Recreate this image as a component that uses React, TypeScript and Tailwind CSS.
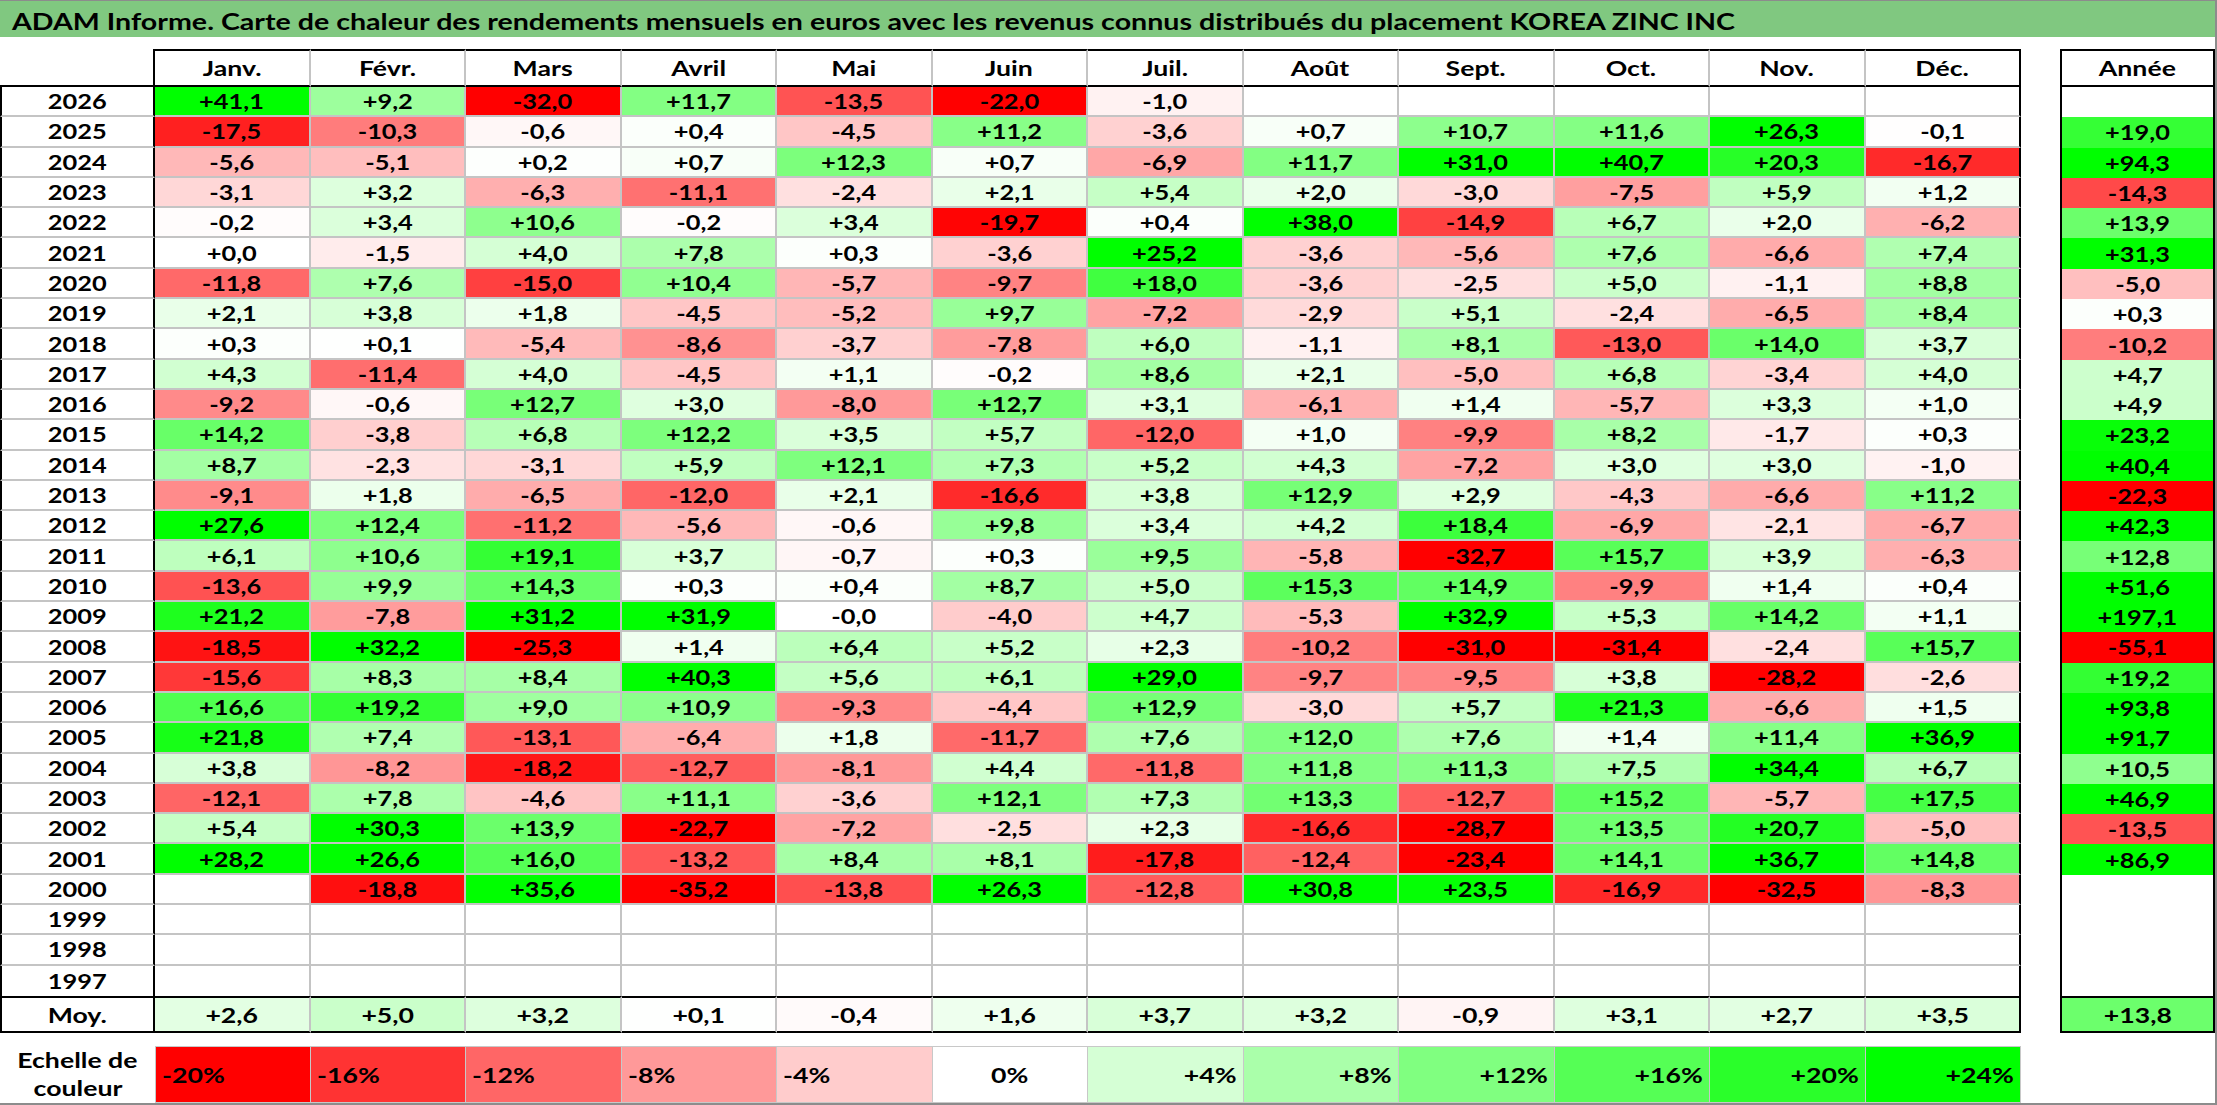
import React from 'react';

const months = ['Janv.', 'Févr.', 'Mars', 'Avril', 'Mai', 'Juin', 'Juil.', 'Août', 'Sept.', 'Oct.', 'Nov.', 'Déc.'];

const RAW = `2026 +41,1 +9,2 -32,0 +11,7 -13,5 -22,0 -1,0 . . . . . .
2025 -17,5 -10,3 -0,6 +0,4 -4,5 +11,2 -3,6 +0,7 +10,7 +11,6 +26,3 -0,1 +19,0
2024 -5,6 -5,1 +0,2 +0,7 +12,3 +0,7 -6,9 +11,7 +31,0 +40,7 +20,3 -16,7 +94,3
2023 -3,1 +3,2 -6,3 -11,1 -2,4 +2,1 +5,4 +2,0 -3,0 -7,5 +5,9 +1,2 -14,3
2022 -0,2 +3,4 +10,6 -0,2 +3,4 -19,7 +0,4 +38,0 -14,9 +6,7 +2,0 -6,2 +13,9
2021 +0,0 -1,5 +4,0 +7,8 +0,3 -3,6 +25,2 -3,6 -5,6 +7,6 -6,6 +7,4 +31,3
2020 -11,8 +7,6 -15,0 +10,4 -5,7 -9,7 +18,0 -3,6 -2,5 +5,0 -1,1 +8,8 -5,0
2019 +2,1 +3,8 +1,8 -4,5 -5,2 +9,7 -7,2 -2,9 +5,1 -2,4 -6,5 +8,4 +0,3
2018 +0,3 +0,1 -5,4 -8,6 -3,7 -7,8 +6,0 -1,1 +8,1 -13,0 +14,0 +3,7 -10,2
2017 +4,3 -11,4 +4,0 -4,5 +1,1 -0,2 +8,6 +2,1 -5,0 +6,8 -3,4 +4,0 +4,7
2016 -9,2 -0,6 +12,7 +3,0 -8,0 +12,7 +3,1 -6,1 +1,4 -5,7 +3,3 +1,0 +4,9
2015 +14,2 -3,8 +6,8 +12,2 +3,5 +5,7 -12,0 +1,0 -9,9 +8,2 -1,7 +0,3 +23,2
2014 +8,7 -2,3 -3,1 +5,9 +12,1 +7,3 +5,2 +4,3 -7,2 +3,0 +3,0 -1,0 +40,4
2013 -9,1 +1,8 -6,5 -12,0 +2,1 -16,6 +3,8 +12,9 +2,9 -4,3 -6,6 +11,2 -22,3
2012 +27,6 +12,4 -11,2 -5,6 -0,6 +9,8 +3,4 +4,2 +18,4 -6,9 -2,1 -6,7 +42,3
2011 +6,1 +10,6 +19,1 +3,7 -0,7 +0,3 +9,5 -5,8 -32,7 +15,7 +3,9 -6,3 +12,8
2010 -13,6 +9,9 +14,3 +0,3 +0,4 +8,7 +5,0 +15,3 +14,9 -9,9 +1,4 +0,4 +51,6
2009 +21,2 -7,8 +31,2 +31,9 -0,0 -4,0 +4,7 -5,3 +32,9 +5,3 +14,2 +1,1 +197,1
2008 -18,5 +32,2 -25,3 +1,4 +6,4 +5,2 +2,3 -10,2 -31,0 -31,4 -2,4 +15,7 -55,1
2007 -15,6 +8,3 +8,4 +40,3 +5,6 +6,1 +29,0 -9,7 -9,5 +3,8 -28,2 -2,6 +19,2
2006 +16,6 +19,2 +9,0 +10,9 -9,3 -4,4 +12,9 -3,0 +5,7 +21,3 -6,6 +1,5 +93,8
2005 +21,8 +7,4 -13,1 -6,4 +1,8 -11,7 +7,6 +12,0 +7,6 +1,4 +11,4 +36,9 +91,7
2004 +3,8 -8,2 -18,2 -12,7 -8,1 +4,4 -11,8 +11,8 +11,3 +7,5 +34,4 +6,7 +10,5
2003 -12,1 +7,8 -4,6 +11,1 -3,6 +12,1 +7,3 +13,3 -12,7 +15,2 -5,7 +17,5 +46,9
2002 +5,4 +30,3 +13,9 -22,7 -7,2 -2,5 +2,3 -16,6 -28,7 +13,5 +20,7 -5,0 -13,5
2001 +28,2 +26,6 +16,0 -13,2 +8,4 +8,1 -17,8 -12,4 -23,4 +14,1 +36,7 +14,8 +86,9
2000 . -18,8 +35,6 -35,2 -13,8 +26,3 -12,8 +30,8 +23,5 -16,9 -32,5 -8,3 .
1999 . . . . . . . . . . . . .
1998 . . . . . . . . . . . . .
1997 . . . . . . . . . . . . .`;

const MOY = ['+2,6', '+5,0', '+3,2', '+0,1', '-0,4', '+1,6', '+3,7', '+3,2', '-0,9', '+3,1', '+2,7', '+3,5'];
const MOY_YEAR = '+13,8';

type Row = { year: string; cells: (string | null)[]; annee: string | null };

const rows: Row[] = RAW.split('\n').map((line) => {
  const parts = line.trim().split(/\s+/);
  const vals = parts.slice(1).map((p) => (p === '.' ? null : p));
  return { year: parts[0], cells: vals.slice(0, 12), annee: vals[12] };
});

function colorOf(v: number): string {
  if (v < 0) {
    const t = Math.min(1, -v / 20);
    const c = Math.round(255 * (1 - t));
    return `rgb(255,${c},${c})`;
  }
  const t = Math.min(1, v / 24);
  const c = Math.round(255 * (1 - t));
  return `rgb(${c},255,${c})`;
}

function bg(s: string | null): string | undefined {
  if (!s) return undefined;
  return colorOf(parseFloat(s.replace(',', '.')));
}

function T({ children, origin = 'origin-center' }: { children: React.ReactNode; origin?: string }) {
  return <span className={`inline-block whitespace-nowrap scale-x-[1.27] ${origin}`}>{children}</span>;
}

const scale = [
  { v: -20, t: '-20%' },
  { v: -16, t: '-16%' },
  { v: -12, t: '-12%' },
  { v: -8, t: '-8%' },
  { v: -4, t: '-4%' },
  { v: 0, t: '0%' },
  { v: 4, t: '+4%' },
  { v: 8, t: '+8%' },
  { v: 12, t: '+12%' },
  { v: 16, t: '+16%' },
  { v: 20, t: '+20%' },
  { v: 24, t: '+24%' },
];

export default function App() {
  return (
    <div className="w-[2217px] h-[1105px] bg-white overflow-hidden flex flex-col border-t border-t-[#8c8c8c] border-r-2 border-r-[#8c8c8c] border-b-2 border-b-[#8c8c8c] font-['Lato',sans-serif] font-bold text-black">
      {/* Title */}
      <div className="h-[36px] shrink-0 bg-[#80c880] flex items-center pl-[12px] pt-[6px] text-[22px] leading-none">
        <span className="inline-block whitespace-nowrap origin-left scale-x-[1.3]">
          ADAM Informe. Carte de chaleur des rendements mensuels en euros avec les revenus connus distribués du placement KOREA ZINC INC
        </span>
      </div>
      <div className="h-[12px] shrink-0" />

      <div className="flex items-start shrink-0">
        {/* Main table */}
        <div className="w-[2021px] flex flex-col">
          {/* header */}
          <div className="flex h-[38px] text-[21px]">
            <div className="w-[155px] h-full border-r-2 border-r-black border-b-2 border-b-black" />
            {months.map((m, i) => (
              <div
                key={m}
                className={`w-[155.5px] h-full flex items-center justify-center border-t-2 border-t-black border-b-2 border-b-black border-r-2 ${
                  i === 11 ? 'border-r-black' : 'border-r-[#c4c4c4]'
                }`}
              >
                <T>{m}</T>
              </div>
            ))}
          </div>
          {/* body */}
          {rows.map((r, ri) => {
            const lastRow = ri === rows.length - 1;
            return (
              <div key={r.year} className="flex h-[30.3px] text-[20px]">
                <div
                  className={`w-[155px] h-full flex items-center justify-center border-l-2 border-l-black border-r-2 border-r-black ${
                    lastRow ? '' : 'border-b-2 border-b-[#c4c4c4]'
                  }`}
                >
                  <T>{r.year}</T>
                </div>
                {r.cells.map((c, ci) => (
                  <div
                    key={ci}
                    className={`w-[155.5px] h-full flex items-center justify-center border-r-2 ${
                      ci === 11 ? 'border-r-black' : 'border-r-[#c4c4c4]'
                    } ${lastRow ? '' : 'border-b-2 border-b-[#c4c4c4]'}`}
                    style={{ background: bg(c) }}
                  >
                    {c ? <T>{c}</T> : null}
                  </div>
                ))}
              </div>
            );
          })}
          {/* Moy */}
          <div className="flex h-[37px] text-[21px]">
            <div className="w-[155px] h-full flex items-center justify-center border-2 border-black">
              <T>Moy.</T>
            </div>
            {MOY.map((c, ci) => (
              <div
                key={ci}
                className={`w-[155.5px] h-full flex items-center justify-center border-t-2 border-t-black border-b-2 border-b-black border-r-2 ${
                  ci === 11 ? 'border-r-black' : 'border-r-[#c4c4c4]'
                }`}
                style={{ background: bg(c) }}
              >
                <T>{c}</T>
              </div>
            ))}
          </div>
        </div>

        <div className="w-[39px] shrink-0" />

        {/* Année column */}
        <div className="w-[155px] flex flex-col">
          <div className="h-[38px] flex items-center justify-center border-2 border-black text-[21px]">
            <T>Année</T>
          </div>
          {rows.map((r) => (
            <div
              key={r.year}
              className="h-[30.3px] flex items-center justify-center border-l-2 border-l-black border-r-2 border-r-black text-[20px]"
              style={{ background: bg(r.annee) }}
            >
              {r.annee ? <T>{r.annee}</T> : null}
            </div>
          ))}
          <div
            className="h-[37px] flex items-center justify-center border-2 border-black text-[21px]"
            style={{ background: bg(MOY_YEAR) }}
          >
            <T>{MOY_YEAR}</T>
          </div>
        </div>
      </div>

      <div className="h-[13px] shrink-0" />

      {/* Colour scale */}
      <div className="flex h-[57px] shrink-0">
        <div className="w-[155px] h-full flex flex-col items-center justify-center text-[21px] leading-[28px]">
          <T>Echelle de</T>
          <T>couleur</T>
        </div>
        {scale.map((s, i) => (
          <div
            key={s.t}
            className={`w-[155.5px] h-full flex items-center border-t border-b border-r border-[#c8c8c8] text-[21px] ${
              i === 0 ? 'border-l' : ''
            } ${s.v < 0 ? 'justify-start pl-[6px]' : s.v === 0 ? 'justify-center' : 'justify-end pr-[6px]'}`}
            style={{ background: colorOf(s.v) }}
          >
            <T origin={s.v < 0 ? 'origin-left' : s.v === 0 ? 'origin-center' : 'origin-right'}>{s.t}</T>
          </div>
        ))}
      </div>
    </div>
  );
}
